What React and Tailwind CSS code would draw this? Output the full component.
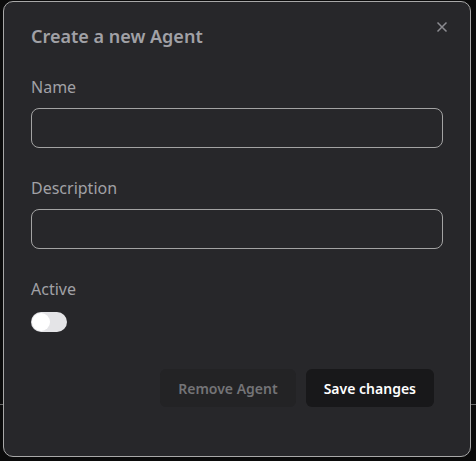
import React from 'react';

const Field = ({ label }) => (
  <div className="flex flex-col">
    <label className="text-[16px] leading-6 text-[#a1a1a6] mb-[9px]">{label}</label>
    <input className="h-10 w-full rounded-lg border border-[#a3a3a3] bg-transparent px-3 text-[#e5e5e5] outline-none" />
  </div>
);

export default function App() {
  return (
    <div className="relative h-[461px] w-[476px] bg-[#0b0b0b] overflow-hidden" style={{ fontFamily: '"Noto Sans", "Open Sans", sans-serif' }}>
      <div className="absolute left-0 right-0 top-[404px] h-px bg-[#6b6b6b]" />
      <div className="absolute left-[3px] top-[1px] h-[456px] w-[468px] rounded-[10px] border border-[#a8a8a8] bg-[#27272a] px-[27px] pt-[24px]">
        <button className="absolute right-[21px] top-[18px] text-[#8b8b90]">
          <svg width="14" height="14" viewBox="0 0 14 14" fill="none" stroke="currentColor" strokeWidth="1.5">
            <path d="M2.5 2.5l9 9M11.5 2.5l-9 9" />
          </svg>
        </button>
        <h2 className="text-[18px] leading-[21px] font-semibold text-[#a1a1a6]">Create a new Agent</h2>
        <div className="mt-[28px] flex flex-col gap-[28px]">
          <Field label="Name" />
          <Field label="Description" />
          <div className="flex flex-col">
            <label className="text-[16px] leading-6 text-[#a1a1a6] mb-[11px]">Active</label>
            <div className="flex h-5 w-9 items-center rounded-full bg-[#e4e4e7] p-[1px]">
              <div className="h-[18px] w-[18px] rounded-full bg-white" />
            </div>
          </div>
        </div>
        <div className="mt-[37px] flex justify-end gap-[10px] pr-[9px]">
          <button className="h-[38px] rounded-md bg-[#232325] px-[18px] text-[14px] font-semibold text-[#747477]">Remove Agent</button>
          <button className="h-[38px] rounded-md bg-[#18181a] px-[18px] text-[14px] font-semibold text-white">Save changes</button>
        </div>
      </div>
    </div>
  );
}
